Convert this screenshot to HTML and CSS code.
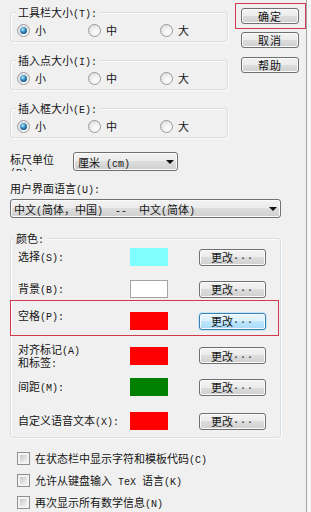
FILE: index.html
```html
<!DOCTYPE html>
<html lang="zh-CN">
<head>
<meta charset="utf-8">
<title>选项</title>
<link rel="stylesheet" href="styles.css">
</head>
<body>
<div class="window">
  <div class="top-area">
    <div class="groups">
      <div class="group">
        <div class="group-title">工具栏大小<span class="h">(T):</span></div>
        <div class="radios">
          <span class="opt"><span class="radio on"></span>小</span>
          <span class="opt"><span class="radio"></span>中</span>
          <span class="opt"><span class="radio"></span>大</span>
        </div>
      </div>
      <div class="group">
        <div class="group-title">插入点大小<span class="h">(I):</span></div>
        <div class="radios">
          <span class="opt"><span class="radio on"></span>小</span>
          <span class="opt"><span class="radio"></span>中</span>
          <span class="opt"><span class="radio"></span>大</span>
        </div>
      </div>
      <div class="group">
        <div class="group-title">插入框大小<span class="h">(E):</span></div>
        <div class="radios">
          <span class="opt"><span class="radio on"></span>小</span>
          <span class="opt"><span class="radio"></span>中</span>
          <span class="opt"><span class="radio"></span>大</span>
        </div>
      </div>
    </div>
    <div class="actions">
      <div class="mark"><span class="btn">确定</span></div>
      <span class="btn cancel">取消</span>
      <span class="btn help">帮助</span>
    </div>
  </div>

  <div class="ruler">
    <div class="ruler-label">标尺单位<br><span class="h">(R):</span></div>
    <div class="combo ruler-combo"><span class="combo-text">厘米<span class="h"> (cm)</span></span><span class="arrow"></span></div>
  </div>

  <div class="lang-label">用户界面语言<span class="h">(U):</span></div>
  <div class="combo lang-combo"><span class="combo-text">中文<span class="h">(</span>简体，中国<span class="h">)  --  </span>中文<span class="h">(</span>简体<span class="h">)</span></span><span class="arrow"></span></div>

  <div class="group colors">
    <div class="group-title">颜色<span class="h">:</span></div>
    <div class="crow r1">
      <span class="clabel">选择<span class="h">(S):</span></span>
      <span class="swatch sw-cyan"></span>
      <span class="btn cbtn">更改<span class="h">...</span></span>
    </div>
    <div class="crow r2">
      <span class="clabel">背景<span class="h">(B):</span></span>
      <span class="swatch sw-white"></span>
      <span class="btn cbtn">更改<span class="h">...</span></span>
    </div>
    <div class="mark space-mark">
      <div class="crow">
        <span class="clabel lbl-top">空格<span class="h">(P):</span></span>
        <span class="swatch sw-red"></span>
        <span class="btn cbtn focus">更改<span class="h">...</span></span>
      </div>
    </div>
    <div class="crow r4">
      <span class="clabel lbl-two">对齐标记<span class="h">(A)</span><br>和标签<span class="h">:</span></span>
      <span class="swatch sw-red"></span>
      <span class="btn cbtn">更改<span class="h">...</span></span>
    </div>
    <div class="crow r5">
      <span class="clabel">间距<span class="h">(M):</span></span>
      <span class="swatch sw-green"></span>
      <span class="btn cbtn">更改<span class="h">...</span></span>
    </div>
    <div class="crow r6">
      <span class="clabel">自定义语音文本<span class="h">(X):</span></span>
      <span class="swatch sw-red"></span>
      <span class="btn cbtn">更改<span class="h">...</span></span>
    </div>
  </div>

  <div class="checks">
    <div class="chk"><span class="check"></span><span>在状态栏中显示字符和模板代码<span class="h">(C)</span></span></div>
    <div class="chk"><span class="check"></span><span>允许从键盘输入<span class="h"> TeX </span>语言<span class="h">(K)</span></span></div>
    <div class="chk"><span class="check"></span><span>再次显示所有数学信息<span class="h">(N)</span></span></div>
  </div>
</div>
</body>
</html>
```

FILE: styles.css
```css
html, body {
  margin: 0;
  padding: 0;
  background: #f6f6f6;
}

.window {
  width: 307px;
  height: 512px;
  box-sizing: border-box;
  border-right: 1px solid #a8a8a8;
  background: #f0f0f0;
  overflow: hidden;
  font-family: "Noto Sans CJK SC", "Noto Sans", sans-serif;
  font-size: 11px;
  line-height: 14px;
  color: #151515;
}

/* half-width latin, like the dialog's bitmap font */
.h {
  font-family: "Liberation Mono", "DejaVu Sans Mono", monospace;
  font-size: 10px;
  line-height: 8px;
  white-space: pre;
}

/* ---------- top area ---------- */
.top-area {
  display: flex;
  padding-left: 10px;
}

.groups {
  width: 218px;
}

.group {
  border: 1px solid #d5dfe5;
  border-radius: 3px;
  box-shadow: inset 1px 1px 0 #fbfbfb, 1px 1px 0 #fbfbfb;
  padding: 0 6px 4px 6px;
  margin-top: 18px;
}

.groups .group:first-child {
  margin-top: 12px;
}

.group-title {
  width: fit-content;
  height: 14px;
  margin: -8px 0 0 -1px;
  padding: 0 2px;
  background: #f0f0f0;
  line-height: 14px;
  white-space: nowrap;
}

.radios {
  display: grid;
  grid-template-columns: 71px 72px auto;
  margin-top: 4px;
  height: 14px;
}

.opt {
  display: flex;
  align-items: center;
  gap: 5px;
}

.radio {
  position: relative;
  width: 13px;
  height: 13px;
  box-sizing: border-box;
  border-radius: 50%;
  border: 1px solid #9a9a9a;
  background: radial-gradient(circle at 65% 70%, #ffffff 0, #f2f2f2 40%, #d6d6d6 100%);
  flex: none;
}

.radio.on::after {
  content: "";
  position: absolute;
  left: 2px;
  top: 2px;
  width: 7px;
  height: 7px;
  border-radius: 50%;
  background: radial-gradient(circle at 40% 35%, #b9ecff 0, #4a9bd0 35%, #114a7c 75%, #0b2f52 100%);
}

.actions {
  display: flex;
  flex-direction: column;
  width: 71px;
  margin: 3px 0 0 7px;
}

.mark {
  border: 1px solid #cf3b4c;
  padding: 4px 6px 4px 5px;
}

.btn {
  display: flex;
  align-items: center;
  justify-content: center;
  width: 58px;
  height: 16px;
  box-sizing: border-box;
  border: 1px solid #707070;
  border-radius: 3px;
  background: linear-gradient(#f3f3f3 0%, #ebebeb 50%, #dddddd 50%, #cfcfcf 100%);
  box-shadow: inset 0 0 0 1px #fbfbfb;
  letter-spacing: 1px;
  white-space: nowrap;
}

.actions .cancel {
  margin: 3px 0 0 6px;
}

.actions .help {
  margin: 9px 0 0 6px;
}

/* ---------- ruler / language ---------- */
.ruler {
  display: flex;
  padding-left: 10px;
  margin-top: 14px;
  height: 19px;
}

.ruler-label {
  width: 63px;
  height: 19px;
  box-sizing: border-box;
  padding-top: 1px;
  line-height: 12px;
  overflow: hidden;
}

.combo {
  display: flex;
  align-items: center;
  height: 19px;
  box-sizing: border-box;
  border: 1px solid #707070;
  border-radius: 3px;
  background: linear-gradient(#f3f3f3 0%, #ebebeb 50%, #dddddd 50%, #cfcfcf 100%);
  box-shadow: inset 0 0 0 1px #fbfbfb;
}

.combo-text {
  white-space: pre;
}

.arrow {
  margin-left: auto;
  margin-right: 3px;
  width: 0;
  height: 0;
  border-left: 4px solid transparent;
  border-right: 4px solid transparent;
  border-top: 4px solid #111;
}

.ruler-combo {
  width: 105px;
  padding-left: 4px;
}

.lang-label {
  height: 14px;
  margin-top: 10px;
  padding-left: 10px;
}

.lang-combo {
  width: 271px;
  margin: 4px 0 0 10px;
  padding-left: 3px;
}

/* ---------- colours ---------- */
.colors {
  width: 271px;
  box-sizing: border-box;
  margin: 20px 0 0 10px;
  padding: 0 0 7px 7px;
}

.colors .group-title {
  margin-left: -4px;
}

.crow {
  display: grid;
  grid-template-columns: 112px 69px 67px;
  align-items: center;
  height: 18px;
}

.crow.r1 { margin-top: 3px; }
.crow.r2 { margin-top: 14px; }
.crow.r4 { margin-top: 6px; }
.crow.r5 { margin-top: 18px; }
.crow.r6 { margin-top: 16px; }

.clabel {
  white-space: nowrap;
  margin-bottom: 2px;
}

.clabel.lbl-top {
  align-self: start;
  margin: -4px 0 0 0;
}

.clabel.lbl-two {
  align-self: start;
  margin: 1px 0 0 0;
  line-height: 13px;
}

.space-mark {
  width: 269px;
  box-sizing: border-box;
  margin: 2px 0 0 -8px;
  padding: 11px 0 5px 7px;
}

.swatch {
  width: 38px;
  height: 18px;
  box-sizing: border-box;
}

.sw-cyan { background: #80ffff; }
.sw-white { background: #ffffff; border: 1px solid #a4a4a4; }
.sw-red { background: #ff0000; }
.sw-green { background: #008000; }

.cbtn {
  width: 67px;
  height: 17px;
  letter-spacing: 0;
}

.cbtn .h {
  letter-spacing: 1px;
}

.cbtn.focus {
  border-color: #3c7fb1;
  background: linear-gradient(#eaf6fd 0%, #d9f0fc 50%, #bee6fd 50%, #a7d9f5 100%);
  box-shadow: inset 0 0 0 1px #f4fbff, 0 0 0 1px #c4e5f6;
}

/* ---------- checkboxes ---------- */
.checks {
  display: flex;
  flex-direction: column;
  gap: 8px;
  margin-top: 13px;
  padding-left: 17px;
}

.chk {
  display: flex;
  align-items: center;
  gap: 5px;
  height: 14px;
  white-space: nowrap;
}

.check {
  width: 13px;
  height: 13px;
  box-sizing: border-box;
  border: 1px solid #8f8f8f;
  padding: 2px;
  background: linear-gradient(135deg, #c6c6c6, #f4f4f4) content-box, #f4f4f4;
  flex: none;
}
```
